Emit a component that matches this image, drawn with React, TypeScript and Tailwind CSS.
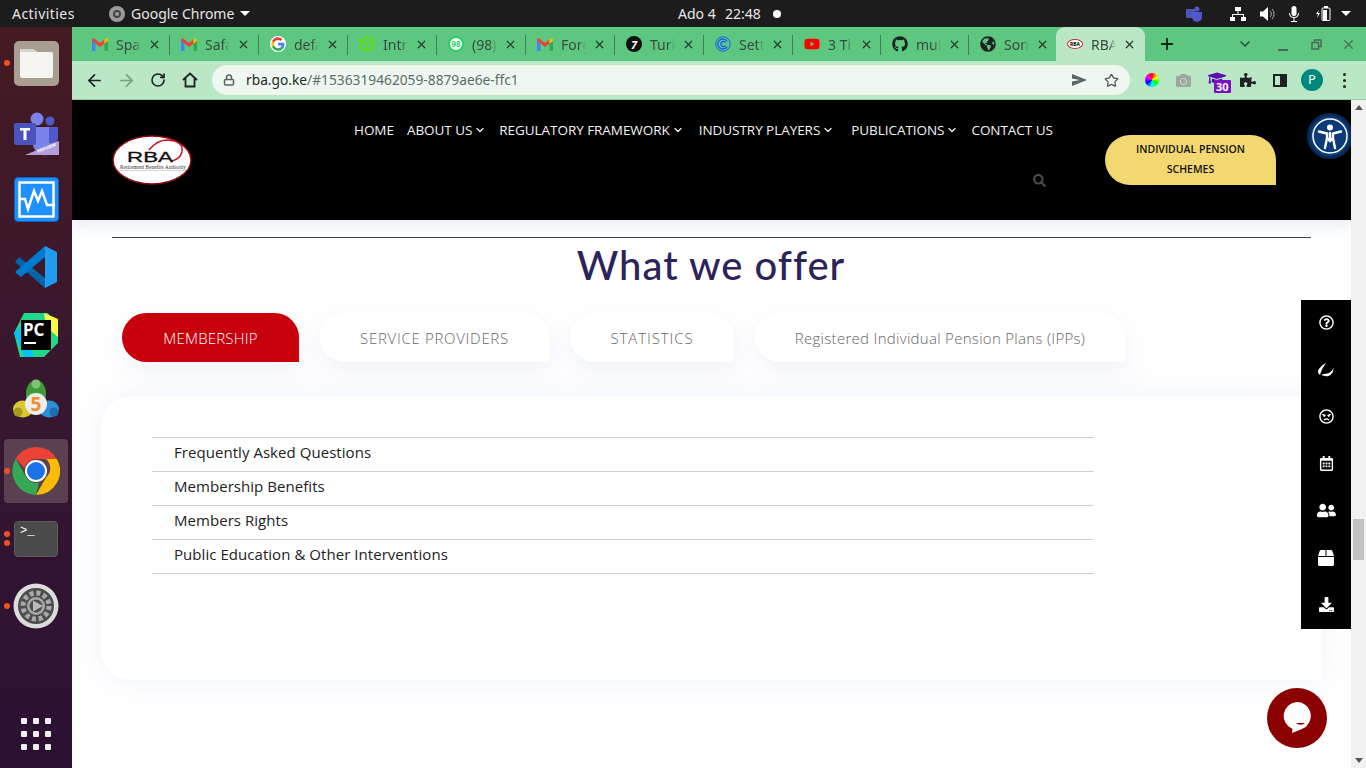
import React from "react";
import { FaRegQuestionCircle, FaRegAngry, FaRegCalendarAlt, FaUserFriends, FaBox, FaDownload, FaPuzzlePiece, FaGithub, FaGlobeAmericas, FaYoutube, FaSearch, FaCamera, FaGraduationCap } from "react-icons/fa";
import { ArrowLeft, ArrowRight, RotateCw, Lock, Star, X, Plus, ChevronDown } from "lucide-react";

const ui = { fontFamily: '"Noto Sans", "Open Sans", sans-serif' };

const Gmail = () => (
  <svg width="16" height="13" viewBox="0 0 16 13" className="block">
    <path d="M0 2v10a1 1 0 0 0 1 1h2.500V5.500z" fill="#4285f4" />
    <path d="M16 2v10a1 1 0 0 1-1 1h-2.500V5.500z" fill="#34a853" />
    <path d="M0 2.500 3.500 5.500 8 9l4.500-3.500V1.500L8 5 3.500 1.500 2 .5C1 0 0 .8 0 2.500z" fill="#ea4335" />
    <path d="M12.500 1.500v4L16 3V2c0-1.600-1-2-2-1.500z" fill="#fbbc04" />
  </svg>
);
const GoogleG = () => (
  <svg width="16" height="16" viewBox="0 0 48 48" className="block">
    <circle cx="24" cy="24" r="24" fill="#fff" />
    <path fill="#ea4335" d="M24 12c3 0 5.500 1 7.500 2.900l5.500-5.500C33.600 6.200 29.200 4 24 4 16.200 4 9.500 8.500 6.200 15l6.500 5C14.300 15.400 18.700 12 24 12z" />
    <path fill="#4285f4" d="M43 24.500c0-1.400-.1-2.700-.4-4H24v8h10.800c-.5 2.500-1.900 4.600-4 6l6.300 4.900C40.800 36.900 43 31.200 43 24.500z" />
    <path fill="#fbbc04" d="M12.700 28.500A12 12 0 0 1 12.700 20l-6.500-5a20 20 0 0 0 0 18z" />
    <path fill="#34a853" d="M24 44c5.200 0 9.500-1.700 13.100-4.600l-6.300-4.900c-1.800 1.200-4 1.900-6.800 1.900-5.300 0-9.700-3.400-11.300-8L6.200 33C9.500 39.500 16.200 44 24 44z" />
  </svg>
);
const Cube = () => (
  <svg width="16" height="16" viewBox="0 0 16 16" fill="none" stroke="#5fe000" strokeWidth="1.500" className="block">
    <path d="M8 1 14.500 4.500v7L8 15l-6.500-3.500v-7zM1.500 4.500 8 8l6.500-3.500M8 8v7" />
  </svg>
);
const Wa = () => (
  <div className="w-4 h-4 rounded-full bg-white border-2 border-[#25d366] flex items-center justify-center">
    <span className="text-[8px] leading-none font-bold text-[#25d366]" style={ui}>98</span>
  </div>
);
const Seven = () => (
  <div className="w-4 h-4 rounded-full bg-[#111] flex items-center justify-center">
    <span className="text-[11px] leading-none font-bold italic text-white" style={ui}>7</span>
  </div>
);
const Copy = () => (
  <svg width="16" height="16" viewBox="0 0 16 16" fill="none" stroke="#1a5cff" className="block">
    <circle cx="8" cy="8" r="7.200" strokeWidth="1" />
    <path d="M12 5.200A5 5 0 1 0 12 10.800" strokeWidth="1.300" />
    <path d="M10.600 6.500A2.600 2.600 0 1 0 10.600 9.500" strokeWidth="1.300" />
  </svg>
);
const MiniRba = () => (
  <div className="w-4 h-[10px] rounded-[50%] bg-white border border-[#b33] flex items-center justify-center">
    <span className="text-[5px] leading-none font-bold text-black" style={ui}>RBA</span>
  </div>
);

const tabs: { icon: React.ReactNode; t: string; w: number; active?: boolean }[] = [
  { icon: <Gmail />, t: "Spa", w: 89 },
  { icon: <Gmail />, t: "Safa", w: 89 },
  { icon: <GoogleG />, t: "defa", w: 89 },
  { icon: <Cube />, t: "Intr", w: 89 },
  { icon: <Wa />, t: "(98)", w: 89 },
  { icon: <Gmail />, t: "Forg", w: 89 },
  { icon: <Seven />, t: "Turi", w: 89 },
  { icon: <Copy />, t: "Sett", w: 89 },
  { icon: <FaYoutube size={16} color="#f00" />, t: "3 Ti", w: 88 },
  { icon: <FaGithub size={16} color="#202124" />, t: "mul", w: 88 },
  { icon: <FaGlobeAmericas size={16} color="#202124" />, t: "Son", w: 87 },
  { icon: <MiniRba />, t: "RBA", w: 89, active: true },
];

function Tab({ icon, t, w, active, last }: { icon: React.ReactNode; t: string; w: number; active?: boolean; last?: boolean }) {
  return (
    <div style={{ width: w }} className={`relative h-[34px] flex items-center pl-[11px] shrink-0 ${active ? "bg-[#bae8c6] rounded-t-[9px]" : ""}`}>
      <div className="w-4 flex justify-center shrink-0">{icon}</div>
      <span className="ml-[8px] w-[25px] overflow-hidden whitespace-nowrap text-[14px] text-[#3b4a40]" style={{ ...ui, maskImage: "linear-gradient(to right,#000 70%,transparent)" }}>{t}</span>
      <X size={13} strokeWidth={2.200} className="ml-[7px] text-[#2a3a30] shrink-0" />
      {!active && !last && <div className="absolute right-0 top-[8px] w-px h-[20px] bg-[#3f7f55]" />}
    </div>
  );
}

const Dot = ({ top }: { top: number }) => (
  <div className="absolute left-[4px] w-[6px] h-[6px] rounded-full bg-[#e95420]" style={{ top }} />
);

function DockSlot({ children, dots = [], active, mt = 0 }: { children: React.ReactNode; dots?: number[]; active?: boolean; mt?: number }) {
  return (
    <div className="relative w-[72px] h-[60px] flex items-center justify-center shrink-0" style={{ marginTop: mt }}>
      {active && <div className="absolute left-[4px] top-[-2px] w-[64px] h-[64px] rounded-[4px] bg-[#5a4050]" />}
      <div className="relative">{children}</div>
      {dots.map((d) => <Dot key={d} top={d} />)}
    </div>
  );
}

function Dock() {
  return (
    <div className="w-[72px] shrink-0 flex flex-col bg-gradient-to-b from-[#451a22] via-[#371730] to-[#2a1032] h-[741px] pt-[6px]">
      <DockSlot dots={[27]}>
        <div className="w-[45px] h-[45px] rounded-[5px] bg-[#a89f92] flex items-center justify-center">
          <svg width="33" height="29" viewBox="0 0 33 29"><path d="M2 0h11l4 3h14a2 2 0 0 1 2 2v22a2 2 0 0 1-2 2H2a2 2 0 0 1-2-2V2a2 2 0 0 1 2-2z" fill="#f7f5f2" /><path d="M0 3V2a2 2 0 0 1 2-2h11l4 3z" fill="#d8d4cf" /></svg>
        </div>
      </DockSlot>
      <DockSlot mt={11}>
        <svg width="46" height="44" viewBox="0 0 46 44">
          <circle cx="24" cy="7" r="6.500" fill="#7b83eb" /><circle cx="37" cy="9" r="4.500" fill="#5059c9" />
          <path d="M14 15h30v14a12 12 0 0 1-24 4H14z" fill="#7b83eb" />
          <path d="M36 15h9v12a7 7 0 0 1-9 4z" fill="#5059c9" />
          <rect x="1" y="11" width="22" height="22" rx="2" fill="#4b53bc" />
          <path d="M7 16h10v2.500h-3.500V28h-3v-9.500H7z" fill="#fff" />
          <path d="M46 29v14H12z" fill="#b39ddb" />
          <text x="25" y="41" fontSize="4.500" fontWeight="700" fill="#fff" transform="rotate(-22 25 41)" style={ui}>PREVIEW</text>
        </svg>
      </DockSlot>
      <DockSlot mt={5}>
        <div className="w-[45px] h-[45px] rounded-[4px] bg-[#1e90ff] border border-[#0c62c4] flex items-center justify-center">
          <svg width="37" height="37" viewBox="0 0 37 37" fill="none" stroke="#fff"><rect x="1.500" y="1.500" width="34" height="34" strokeWidth="2.500" /><path d="M2 18h5l3 10 6-18 4 10 4-10 5 14h8" strokeWidth="2.500" /></svg>
        </div>
      </DockSlot>
      <DockSlot mt={8}>
        <svg width="44" height="44" viewBox="0 0 44 44">
          <path d="M31 1 43 7v30l-12 6z" fill="#1f9cf0" />
          <path d="M5 12 31 33v10L1 17z" fill="#0065a9" />
          <path d="M1 27 31 1v11L7 32z" fill="#007acc" />
        </svg>
      </DockSlot>
      <DockSlot mt={8}>
        <div className="relative w-[44px] h-[44px]">
          <svg width="44" height="44" viewBox="0 0 44 44" className="absolute left-0 top-0">
            <path d="M10 0h24l10 14v16L30 44H6L0 20z" fill="#21d789" /><path d="M30 0l14 6v18L32 14z" fill="#fcf84a" /><path d="M0 20l10 24h10L10 10z" fill="#07c3f2" />
          </svg>
          <div className="absolute left-[7px] top-[7px] w-[30px] h-[30px] bg-black text-white text-[17px] leading-[20px] font-bold pl-[2px]" style={ui}>PC<div className="w-[12px] h-[2px] bg-white ml-[1px] mt-[2px]" /></div>
        </div>
      </DockSlot>
      <DockSlot mt={7}>
        <svg width="46" height="46" viewBox="0 0 46 46">
          <ellipse cx="23" cy="15" rx="10" ry="14" fill="#3f9b3c" /><circle cx="23" cy="5" r="4.500" fill="#7cc46f" />
          <ellipse cx="10" cy="30" rx="10" ry="8.500" fill="#d9c832" /><circle cx="5" cy="33" r="4.500" fill="#a89a20" />
          <ellipse cx="36" cy="30" rx="10" ry="8.500" fill="#2e8fd4" /><circle cx="41" cy="33" r="4.500" fill="#1b6fae" />
          <circle cx="23" cy="25" r="11" fill="#eeeeee" />
          <text x="23" y="32" textAnchor="middle" fontSize="19" fontWeight="700" fill="#ee8f2b" style={ui}>5</text>
        </svg>
      </DockSlot>
      <DockSlot active dots={[27]} mt={9}>
        <svg width="48" height="48" viewBox="0 0 48 48">
          <path d="M24 0a24 24 0 0 1 20.800 12H24a12 12 0 0 0-11.600 9L3.800 11.500A24 24 0 0 1 24 0z" fill="#ea4335" />
          <path d="M44.800 12A24 24 0 0 1 24 48l10.400-18a12 12 0 0 0-.4-18z" fill="#fbbc04" />
          <path d="M3.800 11.500 14 30a12 12 0 0 0 13 5.600L24 48A24 24 0 0 1 3.800 11.500z" fill="#34a853" />
          <circle cx="24" cy="24" r="11" fill="#fff" /><circle cx="24" cy="24" r="9" fill="#1a73e8" />
        </svg>
      </DockSlot>
      <DockSlot dots={[22, 31]} mt={8}>
        <div className="w-[44px] h-[36px] rounded-[4px] bg-[#4a4a4a] border border-[#5c5c5c] relative">
          <span className="absolute left-[5px] top-[-1px] text-white text-[12px] leading-[20px]" style={{ fontFamily: '"Liberation Mono", monospace' }}>&gt;_</span>
        </div>
      </DockSlot>
      <DockSlot dots={[27]} mt={7}>
        <svg width="46" height="46" viewBox="0 0 46 46">
          <circle cx="23" cy="23" r="22.500" fill="#dcdcdc" /><circle cx="23" cy="23" r="18" fill="#4d4d4d" />
          <circle cx="23" cy="23" r="13" fill="none" stroke="#a9a9a9" strokeWidth="5" strokeDasharray="4 2.800" />
          <circle cx="23" cy="23" r="9" fill="#a9a9a9" /><circle cx="23" cy="23" r="6.500" fill="#4d4d4d" /><path d="M20 17.500 30 23l-10 5.500z" fill="#bbb" />
        </svg>
      </DockSlot>
      <div className="flex-1" />
      <div className="grid grid-cols-3 gap-x-[6px] gap-y-[7px] w-[30px] ml-[21px] mb-[18px]">
        {Array.from({ length: 9 }).map((_, i) => <div key={i} className="w-[6px] h-[6px] bg-[#eeeeee] rounded-[1px]" />)}
      </div>
    </div>
  );
}

function TopBar() {
  return (
    <div className="h-[27px] bg-[#1c1c1c] relative flex items-center text-[14px] text-[#e6e6e6] shrink-0" style={ui}>
      <span className="ml-[12px] w-[97px] tracking-[0.45px]">Activities</span>
      <div className="w-4 h-4 rounded-full bg-[#9a9a9a] flex items-center justify-center"><div className="w-2 h-2 rounded-full border-2 border-[#444]" /></div>
      <span className="ml-[6px]">Google Chrome</span>
      <div className="ml-[6px] w-0 h-0 border-l-[5px] border-r-[5px] border-t-[5px] border-l-transparent border-r-transparent border-t-white" />
      <div className="absolute left-[678px] top-[3px] flex items-center">
        <span className="w-[47px]">Ado 4</span><span>22:48</span>
        <div className="ml-[12px] w-2 h-2 rounded-full bg-white" />
      </div>
      <div className="ml-auto flex items-center mr-[15px]">
        <svg width="16" height="16" viewBox="0 0 16 16" className="mr-[28px]"><circle cx="11" cy="3" r="2.500" fill="#5059c9" /><rect x="0" y="3" width="9" height="9" rx="1" fill="#4b53bc" /><path d="M6 6h10v5a5 5 0 0 1-10 0z" fill="#5059c9" /></svg>
        <svg width="16" height="14" viewBox="0 0 16 14" fill="#fff" className="mr-[14px]"><rect x="5" y="0" width="6" height="4" /><rect x="0" y="10" width="5" height="4" /><rect x="11" y="10" width="5" height="4" /><path d="M7.500 4h1v3H14v3h-1V8H3v2H2V7h5.500z" /></svg>
        <svg width="16" height="14" viewBox="0 0 16 14" fill="#fff" className="mr-[13px]"><path d="M0 4.500h3L8 0v14l-5-4.500H0z" /><path d="M10 4a4 4 0 0 1 0 6M12 2a7 7 0 0 1 0 10" fill="none" stroke="#aaa" /></svg>
        <svg width="10" height="16" viewBox="0 0 10 16" fill="#fff" className="mr-[17px]"><rect x="2.500" y="0" width="5" height="10" rx="2.500" /><path d="M0 7h1a4 4 0 0 0 8 0h1a5 5 0 0 1-4.500 5v3H8v1H2v-1h2.500v-3A5 5 0 0 1 0 7z" /></svg>
        <svg width="15" height="15" viewBox="0 0 15 15" fill="#fff" className="mr-[10px]"><path d="M3 4 0 8h2l-1 4 3-5H2z" /><rect x="6" y="2" width="8" height="12.500" rx="1" fill="none" stroke="#fff" /><rect x="8" y="0" width="4" height="2" /><rect x="7" y="4" width="4" height="10" /></svg>
        <div className="w-0 h-0 border-l-[5px] border-r-[5px] border-t-[5px] border-l-transparent border-r-transparent border-t-white" />
      </div>
    </div>
  );
}

function ChromeTabs() {
  return (
    <div className="h-[34px] bg-[#5ec77f] flex items-center pl-[9px] shrink-0">
      {tabs.map((t, i) => <Tab key={i} {...t} last={i === 10} />)}
      <Plus size={18} strokeWidth={2.400} className="ml-[13px] text-[#17241b]" />
      <ChevronDown size={16} strokeWidth={2.200} className="ml-[61px] text-[#33483a]" />
      <div className="ml-[25px] w-[10px] h-[2px] bg-[#4a6b55] mt-[11px]" />
      <svg width="11" height="11" viewBox="0 0 11 11" fill="none" stroke="#4a6b55" strokeWidth="1.500" className="ml-[23px]"><rect x="1" y="3.500" width="6.500" height="6.500" /><path d="M3.500 3V1H10v6.500H8" /></svg>
      <X size={15} strokeWidth={2} className="ml-[19px] text-[#4a6b55]" />
    </div>
  );
}

function Toolbar() {
  return (
    <div className="h-[39px] bg-[#bae8c6] flex items-center border-b border-[#9cc5a8] shrink-0 relative">
      <ArrowLeft size={19} strokeWidth={2.200} className="ml-[13px] text-[#202124]" />
      <ArrowRight size={19} strokeWidth={2.200} className="ml-[13px] text-[#7d9a86]" />
      <RotateCw size={16} strokeWidth={2.400} className="ml-[14px] text-[#202124]" />
      <svg width="16" height="16" viewBox="0 0 16 16" fill="none" stroke="#202124" strokeWidth="1.800" className="ml-[16px]"><path d="M1 8 8 1.500 15 8M3.500 6.500V14.500h9V6.500" /></svg>
      <div className="ml-[14px] w-[918px] h-[30px] rounded-full bg-[#eef8f1] flex items-center">
        <Lock size={12} strokeWidth={3} className="ml-[11px] text-[#5f6368]" />
        <span className="ml-[11px] text-[13.750px] text-[#1f2a22]" style={ui}>rba.go.ke<span className="text-[#5f6b64]">/#1536319462059-8879ae6e-ffc1</span></span>
        <svg width="15" height="12" viewBox="0 0 15 12" className="ml-auto" fill="#5f6368"><path d="M0 0 15 6 0 12l0-4.500L8 6 0 4.500z" /></svg>
        <Star size={15} strokeWidth={2} className="ml-[17px] mr-[11px] text-[#4c5650]" />
      </div>
      <div className="ml-[15px] w-[14px] h-[14px] rounded-full" style={{ background: "conic-gradient(red,#ff0,#0f0,#0ff,#00f,#f0f,red)" }} />
      <FaCamera size={15} className="ml-[17px] text-[#a0a5a2]" />
      <div className="ml-[17px] relative w-[22px] h-[22px]">
        <FaGraduationCap size={18} className="text-[#5c0fb0] absolute left-0 top-0" />
        <div className="absolute left-[6px] top-[11px] bg-[#7a10c4] text-white text-[11px] leading-[13px] font-bold px-[2px] rounded-[1px]" style={ui}>30</div>
      </div>
      <FaPuzzlePiece size={16} className="ml-[10px] text-[#202124]" />
      <svg width="14" height="13" viewBox="0 0 14 13" className="ml-[17px]"><rect x="1" y="1" width="12" height="11" fill="none" stroke="#202124" strokeWidth="2" /><rect x="7" y="1" width="6" height="11" fill="#202124" /></svg>
      <div className="ml-[14px] w-[22px] h-[22px] rounded-full bg-[#00897b] text-white text-[13px] flex items-center justify-center" style={ui}>P</div>
      <div className="ml-[20px] flex flex-col gap-[3px]">
        {[0, 1, 2].map((i) => <div key={i} className="w-[3px] h-[3px] rounded-full bg-[#202124]" />)}
      </div>
    </div>
  );
}

const Caret = () => <ChevronDown size={12} strokeWidth={2.500} className="ml-[2px] text-[#eee]" />;

function Logo() {
  return (
    <svg width="80" height="50" viewBox="0 0 80 50" className="block">
      <ellipse cx="40" cy="25" rx="39" ry="24" fill="#fff" stroke="#8b0a14" strokeWidth="1.500" />
      <path d="M37 15Q45 5 55 5 72 6 70 17 68 24 60 26" fill="none" stroke="#cc1122" strokeWidth="1.500" />
      <text x="15" y="26.500" textLength="46" lengthAdjust="spacingAndGlyphs" fontSize="15" fill="#111" stroke="#111" strokeWidth=".3" style={{ fontFamily: '"Liberation Sans", sans-serif' }}>RBA</text>
      <text x="8" y="33.500" textLength="66" lengthAdjust="spacingAndGlyphs" fontSize="5.500" fill="#333" style={{ fontFamily: '"Liberation Serif", serif' }}>Retirement Benefits Authority</text>
      <path d="M8 35.500h66" stroke="#aaa" strokeWidth=".5" />
    </svg>
  );
}

const navItems = [
  { t: "HOME", caret: false, cn: "mr-[13px]" },
  { t: "ABOUT US", caret: true, cn: "mr-[13px]" },
  { t: "REGULATORY FRAMEWORK", caret: true, cn: "mr-[15px]" },
  { t: "INDUSTRY PLAYERS", caret: true, cn: "mr-[17px]" },
  { t: "PUBLICATIONS", caret: true, cn: "mr-[13px]" },
  { t: "CONTACT US", caret: false, cn: "" },
];

function Header() {
  const navFont = { fontFamily: '"Open Sans", "Noto Sans", sans-serif' };
  return (
    <div className="h-[120px] bg-black flex relative shrink-0 shadow-[0_8px_12px_#eef1f8]">
      <div className="w-[282px] pl-[40px] pt-[35px] shrink-0"><Logo /></div>
      <div className="w-[715px] shrink-0 flex flex-col">
        <div className="flex items-center mt-[20px] h-[20px] text-[13.500px] text-[#f3f3f3]" style={navFont}>
          {navItems.map((n) => (
            <div key={n.t} className={`flex items-center ${n.cn}`}>
              <span className="whitespace-nowrap tracking-[-0.05px]">{n.t}</span>{n.caret && <Caret />}
            </div>
          ))}
        </div>
        <FaSearch size={13} className="text-[#4a4a4a] ml-[679px] mt-[34px]" />
      </div>
      <div className="ml-[36px] mt-[35px] w-[171px] h-[50px] pb-[3px] bg-[#f3d871] rounded-t-[25px] rounded-bl-[25px] flex items-center justify-center text-center text-[10.500px] leading-[20px] font-semibold text-[#111]" style={navFont}>
        <span>INDIVIDUAL PENSION<br />SCHEMES</span>
      </div>
    </div>
  );
}

function OfferTab({ t, w, active, cn = "" }: { t: string; w: number; active?: boolean; cn?: string }) {
  return (
    <div style={{ width: w, fontFamily: '"Open Sans", sans-serif' }}
      className={`h-[49px] pt-[1px] rounded-t-[25px] rounded-bl-[25px] flex items-center justify-center text-[15px] font-light shadow-[0_8px_24px_rgba(180,190,225,0.22)] whitespace-nowrap ${cn} ${active ? "bg-[#c8000b] text-white" : "bg-white text-[#666666]"}`}>
      {t}
    </div>
  );
}

function Page() {
  const items = ["Frequently Asked Questions", "Membership Benefits", "Members Rights", "Public Education & Other Interventions"];
  const font = { fontFamily: '"Open Sans", sans-serif' };
  return (
    <div className="relative flex-1 flex min-h-0 overflow-hidden">
      <div className="w-[1279px] bg-white flex flex-col shrink-0">
        <Header />
        <div className="mt-[17px] ml-[40px] w-[1199px] h-px bg-[#333] shrink-0" />
        <h1 className="h-[54px] text-center text-[40px] leading-[54px] text-[#2c2459] tracking-[1px] shrink-0 ml-[-1px]" style={{ fontFamily: '"Lato", sans-serif', fontWeight: 500 }}>What we offer</h1>
        <div className="flex gap-[21px] ml-[50px] mt-[21px] shrink-0">
          <OfferTab t="MEMBERSHIP" w={177} active cn="tracking-[0.2px]" />
          <OfferTab t="SERVICE PROVIDERS" w={229} cn="tracking-[0.7px]" />
          <OfferTab t="STATISTICS" w={164} cn="tracking-[0.9px]" />
          <OfferTab t="Registered Individual Pension Plans (IPPs)" w={370} cn="tracking-[0.3px]" />
        </div>
        <div className="ml-[29px] mt-[34px] w-[1221px] h-[284px] bg-white rounded-t-[30px] rounded-bl-[30px] shadow-[0_0_30px_rgba(200,210,235,0.3)] pt-[41px] pl-[51px] shrink-0">
          <div className="w-[942px] border-t border-[#cfcfcf]">
            {items.map((it) => (
              <div key={it} className="h-[34px] border-b border-[#cfcfcf] pl-[22px] pb-[5px] flex items-center text-[15px] tracking-[0.05px] text-[#222]" style={font}>{it}</div>
            ))}
          </div>
        </div>
      </div>

      <div className="absolute left-[1235px] top-[13px] w-[46px] h-[46px] rounded-full bg-[#0b3a78] border-[3px] border-[#0a2a55] flex items-center justify-center">
        <svg width="38" height="38" viewBox="0 0 38 38" fill="none">
          <circle cx="19" cy="19" r="17" stroke="#fff" strokeWidth="1.500" />
          <circle cx="19" cy="10.500" r="3" fill="#fff" />
          <path d="M8 14.500 16 16.500V21L14 31M30 14.500 22 16.500V21L24 31M19 16v7M16 21l3 3 3-3" stroke="#fff" strokeWidth="2.400" strokeLinecap="round" />
        </svg>
      </div>

      <div className="w-[15px] bg-[#f1f1f1] relative z-10 shrink-0 flex flex-col items-center justify-between py-[5px]">
        <div className="w-0 h-0 border-l-[4px] border-r-[4px] border-b-[5px] border-l-transparent border-r-transparent border-b-[#555]" />
        <div className="absolute left-[2px] top-[419px] w-[11px] h-[41px] bg-[#c1c1c1]" />
        <div className="w-0 h-0 border-l-[4px] border-r-[4px] border-t-[5px] border-l-transparent border-r-transparent border-t-[#555]" />
      </div>

      <div className="absolute left-[1229px] top-[200px] w-[50px] h-[329px] bg-black flex flex-col items-center text-white overflow-hidden">
        {[
          <FaRegQuestionCircle size={15} />,
          <svg width="16" height="14" viewBox="0 0 16 14" fill="#fff"><path d="M8 0C4 2 0 6 0 9c0 1 1 2 2 3 1-4 3-8 6-12z" /><path d="M15.500 5c-1 3-5 6-9 6-1 0-2 0-3 1 2 1 5 1.500 7 1 3-1 5-4 5-8z" /></svg>,
          <FaRegAngry size={15} />,
          <FaRegCalendarAlt size={15} />,
          <FaUserFriends size={19} />,
          <FaBox size={16} />,
          <FaDownload size={15} />,
        ].map((ic, i) => (
          <div key={i} className={`h-[47px] shrink-0 flex items-center justify-center ${i === 0 ? "mt-[-1px]" : ""}`}>{ic}</div>
        ))}
      </div>

      <div className="absolute left-[1195px] top-[588px] w-[60px] h-[60px] rounded-full bg-[#8b0000] flex items-center justify-center">
        <svg width="28" height="32" viewBox="0 0 28 32"><path d="M14 0a14 14 0 0 1 5 27l-10 4 .5-4A14 14 0 0 1 14 0z" fill="#fff" /><path d="M13 21h9a5 3 0 0 1-9 0z" fill="#8b0000" /></svg>
      </div>
    </div>
  );
}

export default function App() {
  return (
    <div className="w-[1366px] h-[768px] overflow-hidden flex flex-col bg-white">
      <TopBar />
      <div className="flex flex-1 min-h-0">
        <Dock />
        <div className="flex-1 flex flex-col min-w-0">
          <ChromeTabs />
          <Toolbar />
          <Page />
        </div>
      </div>
    </div>
  );
}
